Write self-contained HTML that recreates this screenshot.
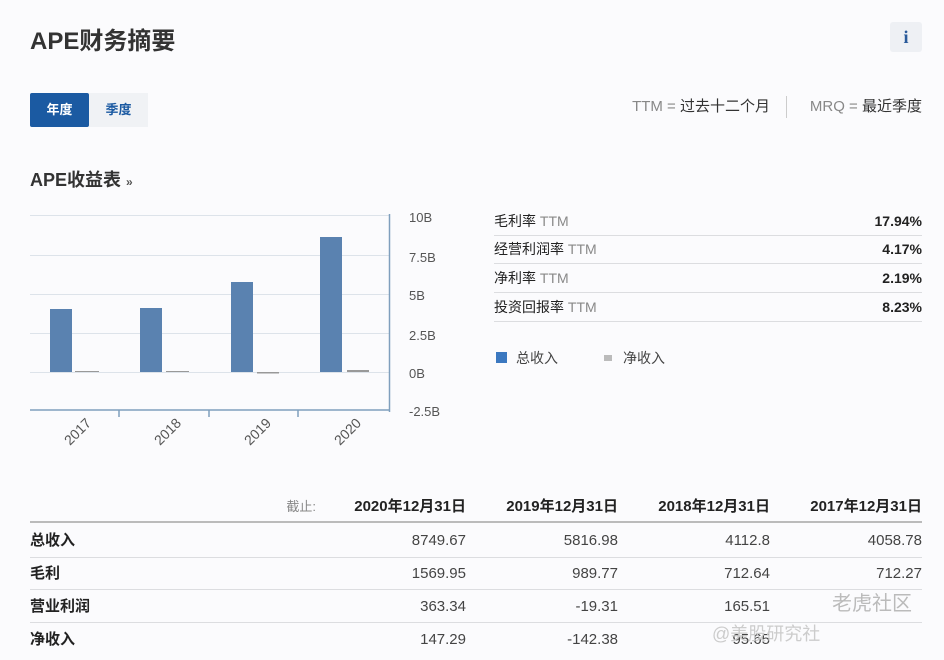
<!DOCTYPE html>
<html><head><meta charset="utf-8"><style>
*{margin:0;padding:0;box-sizing:border-box}
body{width:944px;height:660px;background:#fbfbfd;font-family:"Liberation Sans","Noto Sans CJK SC",sans-serif;color:#222;position:relative;overflow:hidden}
.a{position:absolute;white-space:nowrap;line-height:20px}
.g{color:#888}
.line{position:absolute;height:1px;background:#dcdde0}
.r{text-align:right}
</style></head><body>
<div class="a" style="left:30px;top:28px;font-size:24px;line-height:28px;font-weight:bold;color:#333">APE财务摘要</div>
<div class="a" style="left:890px;top:22px;width:32px;height:30px;background:#eef0f4;border-radius:3px;color:#2a5a9a;font:bold 18px 'Liberation Serif',serif;text-align:center;line-height:30px">i</div>
<div class="a" style="left:30px;top:93px;width:59px;height:34px;background:#1b5aa2;color:#fff;font-size:13px;font-weight:bold;text-align:center;line-height:34px;border-radius:2px">年度</div>
<div class="a" style="left:89px;top:93px;width:59px;height:34px;background:#f0f2f5;color:#1b5aa2;font-size:13px;font-weight:bold;text-align:center;line-height:34px">季度</div>
<div class="a r" style="right:174px;top:97px;font-size:15px;color:#333"><span class="g">TTM = </span>过去十二个月</div>
<div class="a" style="left:786px;top:96px;width:1px;height:22px;background:#ccc"></div>
<div class="a r" style="right:22px;top:97px;font-size:15px;color:#333"><span class="g">MRQ = </span>最近季度</div>
<div class="a" style="left:30px;top:170px;font-size:18px;font-weight:bold;color:#333">APE收益表 <span style="font-size:12px;color:#555">»</span></div>

<svg class="a" style="left:0;top:200px;line-height:normal" width="470" height="260">
<g stroke="#dde3ea" stroke-width="1">
<line x1="30" y1="15.5" x2="389" y2="15.5"/><line x1="30" y1="55.5" x2="389" y2="55.5"/>
<line x1="30" y1="94.5" x2="389" y2="94.5"/><line x1="30" y1="133.5" x2="389" y2="133.5"/>
<line x1="30" y1="172.5" x2="389" y2="172.5"/></g>
<g stroke="#7f9fbd" stroke-width="1.5"><line x1="30" y1="210" x2="390" y2="210"/><line x1="389.5" y1="14" x2="389.5" y2="212"/>
<line x1="119" y1="210" x2="119" y2="217"/><line x1="209" y1="210" x2="209" y2="217"/><line x1="298" y1="210" x2="298" y2="217"/></g>
<g fill="#5a82b0"><rect x="50" y="109" width="22" height="63"/><rect x="140" y="108" width="22" height="64"/><rect x="231" y="82" width="22" height="90"/><rect x="320" y="37" width="22" height="135"/></g>
<g fill="#999"><rect x="75" y="171" width="24" height="1"/><rect x="166" y="171" width="23" height="1"/><rect x="257" y="172" width="22" height="1.5"/><rect x="347" y="170" width="22" height="2"/></g>
<g font-size="13" fill="#555" font-family="Liberation Sans">
<text x="409" y="22">10B</text><text x="409" y="62">7.5B</text><text x="409" y="100">5B</text><text x="409" y="140">2.5B</text><text x="409" y="178">0B</text><text x="409" y="216">-2.5B</text>
<text transform="translate(70,246) rotate(-45)" font-size="14">2017</text><text transform="translate(160,246) rotate(-45)" font-size="14">2018</text>
<text transform="translate(250,246) rotate(-45)" font-size="14">2019</text><text transform="translate(340,246) rotate(-45)" font-size="14">2020</text></g>
</svg>

<div class="a" style="left:494px;top:211px;font-size:14px">毛利率 <span class="g">TTM</span></div>
<div class="a r" style="right:22px;top:211px;font-size:14px;font-weight:bold">17.94%</div>
<div class="line" style="left:494px;width:428px;top:235px"></div>
<div class="a" style="left:494px;top:239px;font-size:14px">经营利润率 <span class="g">TTM</span></div>
<div class="a r" style="right:22px;top:239px;font-size:14px;font-weight:bold">4.17%</div>
<div class="line" style="left:494px;width:428px;top:263px"></div>
<div class="a" style="left:494px;top:268px;font-size:14px">净利率 <span class="g">TTM</span></div>
<div class="a r" style="right:22px;top:268px;font-size:14px;font-weight:bold">2.19%</div>
<div class="line" style="left:494px;width:428px;top:292px"></div>
<div class="a" style="left:494px;top:297px;font-size:14px">投资回报率 <span class="g">TTM</span></div>
<div class="a r" style="right:22px;top:297px;font-size:14px;font-weight:bold">8.23%</div>
<div class="line" style="left:494px;width:428px;top:321px"></div>
<div class="a" style="left:496px;top:352px;width:11px;height:11px;background:#3b78c0"></div>
<div class="a" style="left:516px;top:348px;font-size:14px;color:#444">总收入</div>
<div class="a" style="left:604px;top:355px;width:8px;height:6px;background:#bbb"></div>
<div class="a" style="left:623px;top:348px;font-size:14px;color:#444">净收入</div>

<div class="a g r" style="right:628px;top:497px;font-size:13px">截止:</div>
<div class="a r" style="right:478px;top:497px;font-size:15px;font-weight:bold">2020年12月31日</div>
<div class="a r" style="right:326px;top:497px;font-size:15px;font-weight:bold">2019年12月31日</div>
<div class="a r" style="right:174px;top:497px;font-size:15px;font-weight:bold">2018年12月31日</div>
<div class="a r" style="right:22px;top:497px;font-size:15px;font-weight:bold">2017年12月31日</div>
<div class="a" style="left:30px;top:521px;width:892px;height:2px;background:#bbb"></div>

<div class="a" style="left:30px;top:531px;font-size:15px;font-weight:bold">总收入</div>
<div class="a r" style="right:478px;top:531px;font-size:15px;color:#444">8749.67</div>
<div class="a r" style="right:326px;top:531px;font-size:15px;color:#444">5816.98</div>
<div class="a r" style="right:174px;top:531px;font-size:15px;color:#444">4112.8</div>
<div class="a r" style="right:22px;top:531px;font-size:15px;color:#444">4058.78</div>
<div class="line" style="left:30px;width:892px;top:557px"></div>
<div class="a" style="left:30px;top:564px;font-size:15px;font-weight:bold">毛利</div>
<div class="a r" style="right:478px;top:564px;font-size:15px;color:#444">1569.95</div>
<div class="a r" style="right:326px;top:564px;font-size:15px;color:#444">989.77</div>
<div class="a r" style="right:174px;top:564px;font-size:15px;color:#444">712.64</div>
<div class="a r" style="right:22px;top:564px;font-size:15px;color:#444">712.27</div>
<div class="line" style="left:30px;width:892px;top:589px"></div>
<div class="a" style="left:30px;top:597px;font-size:15px;font-weight:bold">营业利润</div>
<div class="a r" style="right:478px;top:597px;font-size:15px;color:#444">363.34</div>
<div class="a r" style="right:326px;top:597px;font-size:15px;color:#444">-19.31</div>
<div class="a r" style="right:174px;top:597px;font-size:15px;color:#444">165.51</div>
<div class="line" style="left:30px;width:892px;top:622px"></div>
<div class="a" style="left:30px;top:630px;font-size:15px;font-weight:bold">净收入</div>
<div class="a r" style="right:478px;top:630px;font-size:15px;color:#444">147.29</div>
<div class="a r" style="right:326px;top:630px;font-size:15px;color:#444">-142.38</div>
<div class="a r" style="right:174px;top:630px;font-size:15px;color:#444">95.65</div>
<div class="a" style="left:832px;top:594px;font-size:20px;color:#bbb">老虎社区</div>
<div class="a" style="left:712px;top:624px;font-size:18px;color:#ccc">@美股研究社</div>
</body></html>
